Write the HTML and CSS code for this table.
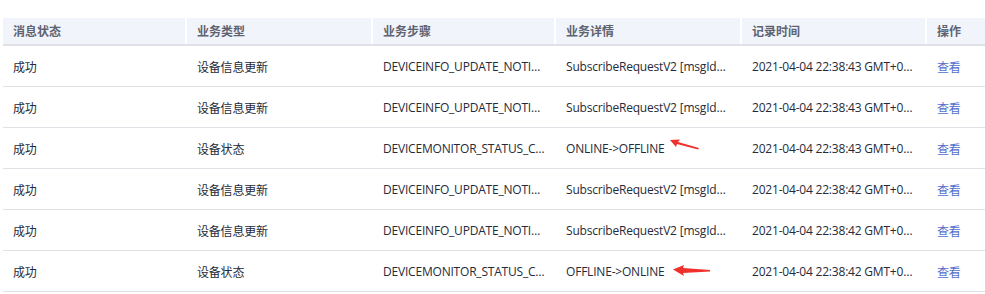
FILE: index.html
```html
<!DOCTYPE html>
<html>
<head>
<meta charset="utf-8">
<link rel="stylesheet" href="styles.css">
</head>
<body>
<div class="wrap">
<table class="grid">
  <colgroup>
    <col class="c1"><col class="c2"><col class="c3"><col class="c4"><col class="c5"><col class="c6">
  </colgroup>
  <thead>
    <tr><th>消息状态</th><th>业务类型</th><th>业务步骤</th><th>业务详情</th><th>记录时间</th><th>操作</th></tr>
  </thead>
  <tbody>
    <tr><td>成功</td><td>设备信息更新</td><td>DEVICEINFO_UPDATE_NOTIFY_REQUEST</td><td>SubscribeRequestV2 [msgId=1]</td><td>2021-04-04 22:38:43 GMT+0800</td><td><a class="link">查看</a></td></tr>
    <tr><td>成功</td><td>设备信息更新</td><td>DEVICEINFO_UPDATE_NOTIFY_REQUEST</td><td>SubscribeRequestV2 [msgId=2]</td><td>2021-04-04 22:38:43 GMT+0800</td><td><a class="link">查看</a></td></tr>
    <tr><td>成功</td><td>设备状态</td><td>DEVICEMONITOR_STATUS_CHANGE</td><td class="mark"><span>ONLINE-&gt;OFFLINE</span><svg class="arrow a1" width="30" height="12" viewBox="0 0 30 12"><path d="M0 1 L10 0.5 L8 3 L29 9 L28 10.5 L7 5 L6 8 Z" fill="#f0302a"/></svg></td><td>2021-04-04 22:38:43 GMT+0800</td><td><a class="link">查看</a></td></tr>
    <tr><td>成功</td><td>设备信息更新</td><td>DEVICEINFO_UPDATE_NOTIFY_REQUEST</td><td>SubscribeRequestV2 [msgId=3]</td><td>2021-04-04 22:38:42 GMT+0800</td><td><a class="link">查看</a></td></tr>
    <tr><td>成功</td><td>设备信息更新</td><td>DEVICEINFO_UPDATE_NOTIFY_REQUEST</td><td>SubscribeRequestV2 [msgId=4]</td><td>2021-04-04 22:38:42 GMT+0800</td><td><a class="link">查看</a></td></tr>
    <tr><td>成功</td><td>设备状态</td><td>DEVICEMONITOR_STATUS_CHANGE</td><td class="mark"><span>OFFLINE-&gt;ONLINE</span><svg class="arrow a2" width="38" height="12" viewBox="0 0 38 12"><path d="M0 4.5 L11 0 L10 3 L37 5 L37 6.5 L10 8 L11 11 Z" fill="#f0302a"/></svg></td><td>2021-04-04 22:38:42 GMT+0800</td><td><a class="link">查看</a></td></tr>
  </tbody>
</table>
</div>
</body>
</html>
```

FILE: styles.css
```css
html, body { margin: 0; padding: 0; background: #fff; }
body {
  font-family: "Segoe UI", "Open Sans", "Noto Sans CJK SC", sans-serif;
  font-size: 12px;
  color: #252b3a;
}
.wrap { padding: 18px 0 0 3px; }
.grid {
  width: 982px;
  border-collapse: collapse;
  table-layout: fixed;
}
.c1 { width: 183px; }
.c2 { width: 186px; }
.c3 { width: 183px; }
.c4 { width: 186px; }
.c5 { width: 185px; }
.c6 { width: 59px; }
.grid th {
  height: 26px;
  background: #f1f4fb;
  color: #5e6370;
  font-weight: 600;
  text-align: left;
  padding: 0 10px;
  border-bottom: 2px solid #dfe1e6;
  border-left: 2px solid #fff;
  white-space: nowrap;
}
.grid th:first-child { border-left: 0; }
.grid td {
  height: 39px;
  padding: 1px 10px 0 10px;
  border-bottom: 1px solid #dfe1e6;
  white-space: nowrap;
  overflow: hidden;
  text-overflow: ellipsis;
  letter-spacing: -0.2px;
}
.grid td + td { padding-left: 11px; }
.grid td.mark { position: relative; overflow: visible; }
.link { color: #526ecc; cursor: pointer; }
.arrow { position: absolute; }
.a1 { left: 115px; top: 11px; }
.a2 { left: 118px; top: 14px; }
```
